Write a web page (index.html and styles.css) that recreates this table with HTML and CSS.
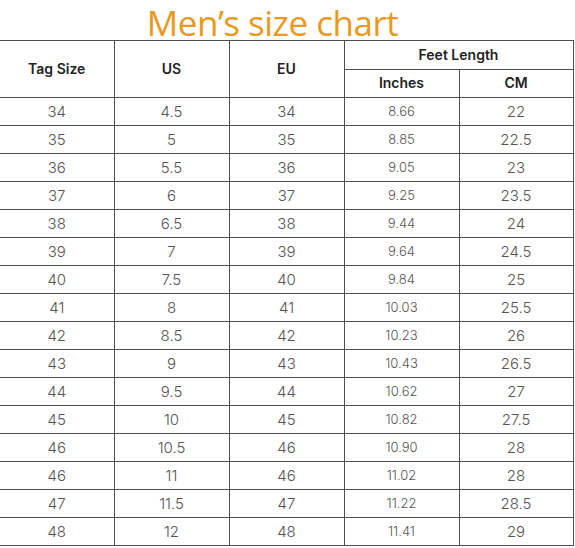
FILE: index.html
```html
<!DOCTYPE html>
<html>
<head>
<meta charset="utf-8">
<link rel="stylesheet" href="styles.css">
</head>
<body>
<div class="page">
  <div class="title-bar"><h1 class="title">Men’s size chart</h1></div>
  <table class="chart">
    <colgroup>
      <col class="c1"><col class="c2"><col class="c3"><col class="c4"><col class="c5">
    </colgroup>
    <thead>
      <tr class="h1row">
        <th rowspan="2" class="first">Tag Size</th>
        <th rowspan="2">US</th>
        <th rowspan="2">EU</th>
        <th colspan="2">Feet Length</th>
      </tr>
      <tr class="h2row">
        <th>Inches</th>
        <th>CM</th>
      </tr>
    </thead>
    <tbody>
      <tr><td class="first">34</td><td>4.5</td><td>34</td><td class="in">8.66</td><td>22</td></tr>
      <tr><td class="first">35</td><td>5</td><td>35</td><td class="in">8.85</td><td>22.5</td></tr>
      <tr><td class="first">36</td><td>5.5</td><td>36</td><td class="in">9.05</td><td>23</td></tr>
      <tr><td class="first">37</td><td>6</td><td>37</td><td class="in">9.25</td><td>23.5</td></tr>
      <tr><td class="first">38</td><td>6.5</td><td>38</td><td class="in">9.44</td><td>24</td></tr>
      <tr><td class="first">39</td><td>7</td><td>39</td><td class="in">9.64</td><td>24.5</td></tr>
      <tr><td class="first">40</td><td>7.5</td><td>40</td><td class="in">9.84</td><td>25</td></tr>
      <tr><td class="first">41</td><td>8</td><td>41</td><td class="in">10.03</td><td>25.5</td></tr>
      <tr><td class="first">42</td><td>8.5</td><td>42</td><td class="in">10.23</td><td>26</td></tr>
      <tr><td class="first">43</td><td>9</td><td>43</td><td class="in">10.43</td><td>26.5</td></tr>
      <tr><td class="first">44</td><td>9.5</td><td>44</td><td class="in">10.62</td><td>27</td></tr>
      <tr><td class="first">45</td><td>10</td><td>45</td><td class="in">10.82</td><td>27.5</td></tr>
      <tr><td class="first">46</td><td>10.5</td><td>46</td><td class="in">10.90</td><td>28</td></tr>
      <tr><td class="first">46</td><td>11</td><td>46</td><td class="in">11.02</td><td>28</td></tr>
      <tr><td class="first">47</td><td>11.5</td><td>47</td><td class="in">11.22</td><td>28.5</td></tr>
      <tr><td class="first">48</td><td>12</td><td>48</td><td class="in">11.41</td><td>29</td></tr>
    </tbody>
  </table>
</div>
</body>
</html>
```
FILE: styles.css
```css
html, body {
  margin: 0;
  padding: 0;
  background: #ffffff;
}
.page {
  width: 575px;
  height: 548px;
  overflow: hidden;
}
.title-bar {
  height: 40px;
  display: flex;
  align-items: flex-end;
  justify-content: center;
  padding-right: 30px;
}
.title {
  margin: 0;
  font-family: "Open Sans", sans-serif;
  font-weight: 400;
  font-size: 35px;
  line-height: 35px;
  color: #e99a1e;
  letter-spacing: -0.5px;
}
.chart {
  border-collapse: collapse;
  width: 573px;
  table-layout: fixed;
  font-family: "Inter", "Noto Sans", sans-serif;
}
.c1 { width: 114px; }
.c2 { width: 115px; }
.c3 { width: 115px; }
.c4 { width: 115px; }
.c5 { width: 114px; }
.chart th,
.chart td {
  border: 1px solid #505050;
  padding: 0;
  text-align: center;
  vertical-align: middle;
}
.chart .first {
  border-left: none;
}
.chart th {
  font-weight: 600;
  font-size: 14px;
  color: #222222;
  padding-bottom: 2px;
}
.h1row { height: 29px; }
.h2row { height: 28px; }
.chart td {
  height: 26px;
  padding-bottom: 1px;
  font-weight: 300;
  font-size: 15px;
  color: #555555;
}
.chart td.in {
  font-size: 13px;
}
```
